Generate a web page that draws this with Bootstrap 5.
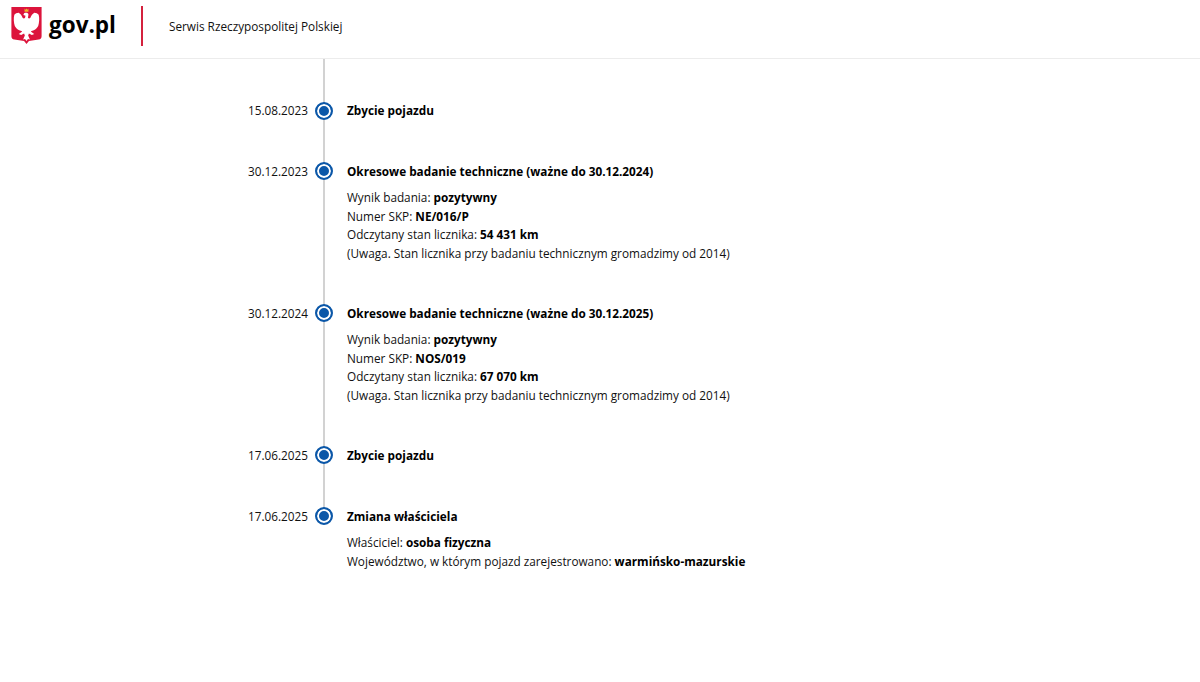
<!DOCTYPE html>
<html lang="pl">
<head>
  <meta charset="UTF-8" />
  <title>gov.pl - Historia pojazdu</title>
  <link href="https://cdn.jsdelivr.net/npm/bootstrap@5.3.0/dist/css/bootstrap.min.css" rel="stylesheet">
  <style>
    body {
      font-family: "Open Sans", "Liberation Sans", sans-serif;
      font-size: 11.77px;
      line-height: 18.5px;
      color: #111;
      background: #fff;
    }
    .site-head {
      height: 59px;
      border-bottom: 1px solid #ececec;
      padding-left: 11px;
      padding-bottom: 6px;
    }
    .shield-logo {
      margin-top: -1px;
    }
    .gov-name {
      font-size: 22.5px;
      font-weight: 700;
      line-height: 1;
      color: #000;
      margin-left: 7px;
      margin-top: -1px;
      width: 67px;
    }
    .head-rule {
      width: 2px;
      height: 40px;
      background: #d4213d;
      margin-left: 25px;
      margin-right: 26px;
    }
    .tl-list {
      padding-left: 248px;
    }
    .tl-item {
      position: relative;
      padding-top: 42px;
    }
    .tl-item::before {
      content: "";
      position: absolute;
      left: 75px;
      top: 0;
      bottom: 0;
      width: 2px;
      background: #d2d2d2;
    }
    .tl-item:last-child::before {
      bottom: auto;
      height: 50px;
    }
    .tl-date {
      width: 60px;
      line-height: 19px;
    }
    .tl-dot {
      position: relative;
      z-index: 1;
      width: 18px;
      height: 18px;
      margin: 0 14px 0 7px;
      border: 2px solid #0b57a8;
      border-radius: 50%;
      background: #0b57a8;
      box-shadow: inset 0 0 0 2px #fff;
      flex: none;
    }
    .tl-item:first-child .tl-dot {
      margin-top: 1px;
    }
    .tl-title {
      line-height: 19px;
      font-weight: 700;
      color: #000;
    }
    .tl-body {
      margin-top: 7px;
    }
    .tl-body b {
      font-weight: 700;
      color: #000;
    }
  </style>
</head>
<body>
  <header class="site-head d-flex align-items-center">
    <svg width="31" height="37" viewBox="0 0 31 38" class="shield-logo flex-shrink-0">
      <path d="M0 0h31v30c0 2-1 3-3 3.500L18 35l-2.500 3L13 35 3 33.500C1 33 0 32 0 30z" fill="#dc143c"/>
      <path d="M13.500 1.500l1 1.200 1-1.200 1 1.200 1-1.200v3.500h-4z" fill="#f0b429"/>
      <path d="M13 6.500c2-1 4.500-.5 4.500 1.500l-.5 3c.8 1 1.500 1 2.500 0 .8-2 2.200-4 4-5 2 0 3.500 1 4.500 2 1 3.500.5 8.500-.5 11.500-1 2-2.500 3.500-4.500 4.500l-3 1c.5 1 1.800 1.800 3.500 2.800l-2.500 1-3-1.500-.8 2 1.800 4-2-.5-1.500 2-1.500-2-2 .5 1.800-4-.8-2-3 1.500-2.500-1c1.700-1 3-1.800 3.500-2.800l-3-1c-2-1-3.500-2.500-4.500-4.500-1-3-1.500-8-.5-11.500 1-1 2.500-2 4.500-2 1.800 1 3.200 3 4 5 1 1 1.700 1 2.500 0l.5-2-2.200-.8z" fill="#fff"/>
    </svg>
    <span class="gov-name">gov.pl</span>
    <span class="head-rule"></span>
    <span>Serwis Rzeczypospolitej Polskiej</span>
  </header>

  <main class="tl-list">
    <div class="tl-item d-flex">
      <div class="tl-date">15.08.2023</div>
      <div class="tl-dot"></div>
      <div class="tl-title">Zbycie pojazdu</div>
    </div>
    <div class="tl-item d-flex">
      <div class="tl-date">30.12.2023</div>
      <div class="tl-dot"></div>
      <div>
        <div class="tl-title">Okresowe badanie techniczne (ważne do 30.12.2024)</div>
        <div class="tl-body">
          Wynik badania: <b>pozytywny</b><br>
          Numer SKP: <b>NE/016/P</b><br>
          Odczytany stan licznika: <b>54 431 km</b><br>
          (Uwaga. Stan licznika przy badaniu technicznym gromadzimy od 2014)
        </div>
      </div>
    </div>
    <div class="tl-item d-flex">
      <div class="tl-date">30.12.2024</div>
      <div class="tl-dot"></div>
      <div>
        <div class="tl-title">Okresowe badanie techniczne (ważne do 30.12.2025)</div>
        <div class="tl-body">
          Wynik badania: <b>pozytywny</b><br>
          Numer SKP: <b>NOS/019</b><br>
          Odczytany stan licznika: <b>67 070 km</b><br>
          (Uwaga. Stan licznika przy badaniu technicznym gromadzimy od 2014)
        </div>
      </div>
    </div>
    <div class="tl-item d-flex">
      <div class="tl-date">17.06.2025</div>
      <div class="tl-dot"></div>
      <div class="tl-title">Zbycie pojazdu</div>
    </div>
    <div class="tl-item d-flex">
      <div class="tl-date">17.06.2025</div>
      <div class="tl-dot"></div>
      <div>
        <div class="tl-title">Zmiana właściciela</div>
        <div class="tl-body">
          Właściciel: <b>osoba fizyczna</b><br>
          Województwo, w którym pojazd zarejestrowano: <b>warmińsko-mazurskie</b>
        </div>
      </div>
    </div>
  </main>
</body>
</html>
